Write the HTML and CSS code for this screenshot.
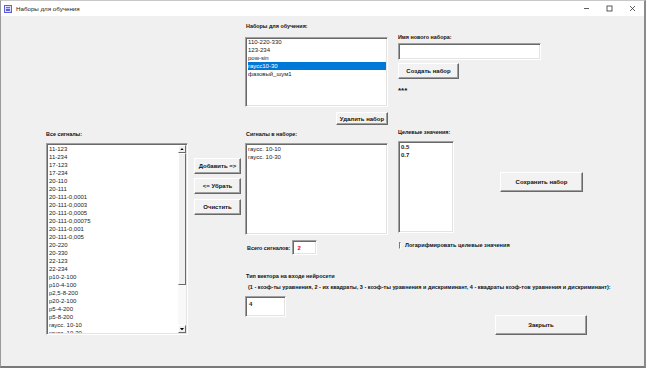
FILE: index.html
```html
<!DOCTYPE html>
<html lang="ru">
<head>
  <meta charset="UTF-8" />
  <title>Наборы для обучения</title>
  <link rel="stylesheet" href="styles.css">
</head>
<body>
  <div class="window">
    <!-- заголовок окна -->
    <div class="titlebar">
      <svg class="app-icon" viewBox="0 0 8 8">
        <rect width="8" height="8" fill="#5b62dc"/>
        <rect x="1.5" y="1.5" width="5" height="5" fill="none" stroke="#fff" stroke-width="0.8"/>
        <line x1="1.5" y1="3.4" x2="6.5" y2="3.4" stroke="#fff" stroke-width="0.7"/>
      </svg>
      <span class="title">Наборы для обучения</span>
      <div class="caption-buttons">
        <svg viewBox="0 0 23 15"><line x1="9" y1="7.5" x2="14" y2="7.5" stroke="#333" stroke-width="0.8"/></svg>
        <svg viewBox="0 0 23 15"><rect x="9" y="5" width="5" height="5" fill="none" stroke="#333" stroke-width="0.8"/></svg>
        <svg viewBox="0 0 23 15"><path d="M9 5 L14 10 M14 5 L9 10" stroke="#333" stroke-width="0.8"/></svg>
      </div>
    </div>

    <div class="client">
      <!-- все сигналы -->
      <div class="col col-all">
        <div class="label">Все сигналы:</div>
        <div class="listbox list-all">
          <div class="items">
            <div>11-123</div>
            <div>11-234</div>
            <div>17-123</div>
            <div>17-234</div>
            <div>20-110</div>
            <div>20-111</div>
            <div>20-111-0,0001</div>
            <div>20-111-0,0003</div>
            <div>20-111-0,0005</div>
            <div>20-111-0,00075</div>
            <div>20-111-0,001</div>
            <div>20-111-0,005</div>
            <div>20-220</div>
            <div>20-330</div>
            <div>22-123</div>
            <div>22-234</div>
            <div>p10-2-100</div>
            <div>p10-4-100</div>
            <div>p2,5-8-200</div>
            <div>p20-2-100</div>
            <div>p5-4-200</div>
            <div>p5-8-200</div>
            <div>гаусс. 10-10</div>
            <div>гаусс. 10-30</div>
          </div>
          <div class="vscroll">
            <div class="sb-arrow"><svg viewBox="0 0 5 3"><path d="M0 3 L2.5 0 L5 3 Z" fill="#000"/></svg></div>
            <div class="sb-thumb"></div>
            <div class="sb-track"></div>
            <div class="sb-arrow"><svg viewBox="0 0 5 3"><path d="M0 0 L2.5 3 L5 0 Z" fill="#000"/></svg></div>
          </div>
        </div>
      </div>

      <!-- кнопки перемещения -->
      <div class="col col-move">
        <button class="btn btn-move">Добавить =&gt;</button>
        <button class="btn btn-move">&lt;= Убрать</button>
        <button class="btn btn-move btn-clear">Очистить</button>
      </div>

      <!-- наборы и сигналы в наборе -->
      <div class="col col-set">
        <div class="label">Наборы для обучения:</div>
        <div class="listbox list-sets">
          <div>110-220-330</div>
          <div>123-234</div>
          <div>pow-sin</div>
          <div class="selected">гаусс10-30</div>
          <div>фазовый_шум1</div>
        </div>
        <button class="btn btn-delete">Удалить набор</button>
        <div class="label label-signals">Сигналы в наборе:</div>
        <div class="listbox list-signals">
          <div>гаусс. 10-10</div>
          <div>гаусс. 10-30</div>
        </div>
        <div class="total-row">
          <span class="label">Всего сигналов:</span>
          <div class="textbox total-box">2</div>
        </div>
        <div class="type-text">
          <div class="type-title">Тип вектора на входе нейросети</div>
          <div class="type-hint">(1 - коэф-ты уравнения, 2 - их квадраты, 3 - коэф-ты уравнения и дискриминант, 4 - квадраты коэф-тов уравнения и дискриминант):</div>
        </div>
        <div class="textbox type-box">4</div>
      </div>

      <!-- новый набор, целевые значения -->
      <div class="col col-right">
        <div class="label">Имя нового набора:</div>
        <div class="textbox name-box"></div>
        <button class="btn btn-create">Создать набор</button>
        <div class="label stars">***</div>
        <div class="targets-row">
          <div class="targets">
            <div class="label">Целевые значения:</div>
            <div class="listbox list-targets">
              <div>0.5</div>
              <div>0.7</div>
            </div>
            <div class="check-row">
              <span class="check"></span>
              <span class="check-text">Логарифмировать целевые значения</span>
            </div>
          </div>
          <button class="btn btn-save">Сохранить набор</button>
        </div>
        <button class="btn btn-close">Закрыть</button>
      </div>
    </div>
  </div>
</body>
</html>
```

FILE: styles.css
```css
* {
  box-sizing: border-box;
}

body {
  margin: 0;
  background: #fff;
  font-family: "Liberation Sans", Arial, sans-serif;
  color: #000;
}

.window {
  width: 646px;
  height: 368px;
  display: flex;
  flex-direction: column;
  border-top: 1px solid #c8c8c8;
  border-left: 1px solid #9a9a9a;
  border-right: 2px solid #8a8a8a;
  border-bottom: 2px solid #7a7a7a;
}

/* заголовок */
.titlebar {
  height: 15px;
  display: flex;
  align-items: center;
  background: #fff;
  padding-left: 3px;
}
.app-icon {
  width: 8px;
  height: 8px;
}
.title {
  font-size: 6.2px;
  margin-left: 4px;
  color: #1a1a1a;
}
.caption-buttons {
  margin-left: auto;
  display: flex;
}
.caption-buttons svg {
  width: 23px;
  height: 15px;
}

/* клиентская область */
.client {
  flex: 1;
  background: #f0f0f0;
  display: flex;
  align-items: flex-start;
  padding-left: 45px;
}
.col {
  display: flex;
  flex-direction: column;
  align-items: flex-start;
}

.label {
  font-weight: bold;
  font-size: 5.4px;
  line-height: 8px;
  height: 8px;
  white-space: nowrap;
  color: #111;
}

/* списки и поля ввода */
.listbox,
.textbox {
  background: #fff;
  border: 1px solid;
  border-color: #a0a0a0 #fff #fff #a0a0a0;
  box-shadow: inset 1px 1px 0 #696969, inset -1px -1px 0 #e3e3e3;
  font-size: 6px;
  line-height: 8px;
  color: #222;
  white-space: nowrap;
  overflow: hidden;
}
.listbox {
  padding: 1px 1px 0 2px;
}
.listbox .selected {
  background: #0078d7;
  color: #fff;
}

/* кнопки */
.btn {
  font-family: inherit;
  font-weight: bold;
  font-size: 6px;
  color: #111;
  background: #f2f2f2;
  border: 1px solid;
  border-color: #fff #696969 #696969 #fff;
  box-shadow: inset -1px -1px 0 #a0a0a0;
  padding: 0;
  white-space: nowrap;
}

/* все сигналы */
.col-all {
  width: 142px;
  margin-top: 114px;
}
.col-all .label {
  margin-bottom: 5px;
}
.list-all {
  width: 142px;
  height: 192px;
  display: flex;
  padding: 1px 1px 1px 2px;
}
.list-all .items {
  flex: 1;
  overflow: hidden;
}
.vscroll {
  width: 8px;
  display: flex;
  flex-direction: column;
  background: #f8f8f8;
}
.sb-arrow {
  height: 8px;
  display: flex;
  align-items: center;
  justify-content: center;
  background: #f0f0f0;
  border: 1px solid;
  border-color: #fff #696969 #696969 #fff;
}
.sb-arrow svg {
  width: 4px;
  height: 2.5px;
}
.sb-thumb {
  height: 132px;
  background: #f0f0f0;
  border: 1px solid;
  border-color: #fff #696969 #696969 #fff;
}
.sb-track {
  flex: 1;
}

/* кнопки перемещения */
.col-move {
  width: 47px;
  margin-left: 6px;
  margin-top: 142px;
}
.btn-move {
  width: 47px;
  height: 16px;
  margin-bottom: 4px;
}
.btn-clear {
  margin-top: 1px;
}

/* наборы */
.col-set {
  width: 143px;
  margin-left: 4px;
  margin-top: 6px;
}
.col-set > .label {
  margin-left: 1px;
}
.list-sets {
  width: 143px;
  height: 70px;
  margin-top: 7px;
  padding-top: 0;
}
.btn-delete {
  align-self: flex-end;
  width: 52px;
  height: 13px;
  margin-top: 5px;
}
.label-signals {
  margin-top: 5px;
}
.list-signals {
  width: 143px;
  height: 92px;
  margin-top: 5px;
}
.total-row {
  display: flex;
  align-items: center;
  margin-top: 5px;
  padding-left: 2px;
}
.total-box {
  width: 25px;
  height: 15px;
  margin-left: 2px;
  padding: 3px 0 0 4px;
  color: #e8001c;
  font-weight: bold;
}
.type-text {
  margin-top: 16px;
  margin-left: 1px;
  font-size: 5.5px;
  line-height: 11px;
  white-space: nowrap;
  color: #111;
}
.type-title {
  font-weight: 600;
}
.type-hint {
  font-weight: bold;
  padding-left: 2px;
}
.type-box {
  width: 41px;
  height: 21px;
  margin-top: 3px;
  padding: 3px 0 0 3px;
  font-weight: bold;
}

/* правая колонка */
.col-right {
  margin-left: 10px;
  margin-top: 17px;
}
.name-box {
  width: 143px;
  height: 17px;
  margin-top: 2px;
}
.btn-create {
  width: 61px;
  height: 16px;
  margin-top: 3px;
}
.stars {
  margin-top: 7px;
  font-size: 8px;
  line-height: 10px;
}
.targets-row {
  display: flex;
  align-items: flex-start;
  margin-top: 34px;
}
.targets {
  width: 56px;
  display: flex;
  flex-direction: column;
}
.list-targets {
  width: 56px;
  height: 92px;
  margin-top: 5px;
  font-weight: bold;
}
.check-row {
  display: flex;
  align-items: center;
  height: 8px;
  margin-top: 8px;
  padding-left: 1px;
  white-space: nowrap;
}
.check {
  width: 7px;
  height: 7px;
  background: #fff;
  border: 1px solid;
  border-color: #7a7a7a #fff #fff #7a7a7a;
}
.check-text {
  font-weight: bold;
  font-size: 5.6px;
  margin-left: 4px;
  color: #111;
}
.btn-save {
  width: 83px;
  height: 20px;
  margin-left: 46px;
  margin-top: 44px;
}
.btn-close {
  width: 92px;
  height: 20px;
  margin-left: 97px;
  margin-top: 66px;
}
```
